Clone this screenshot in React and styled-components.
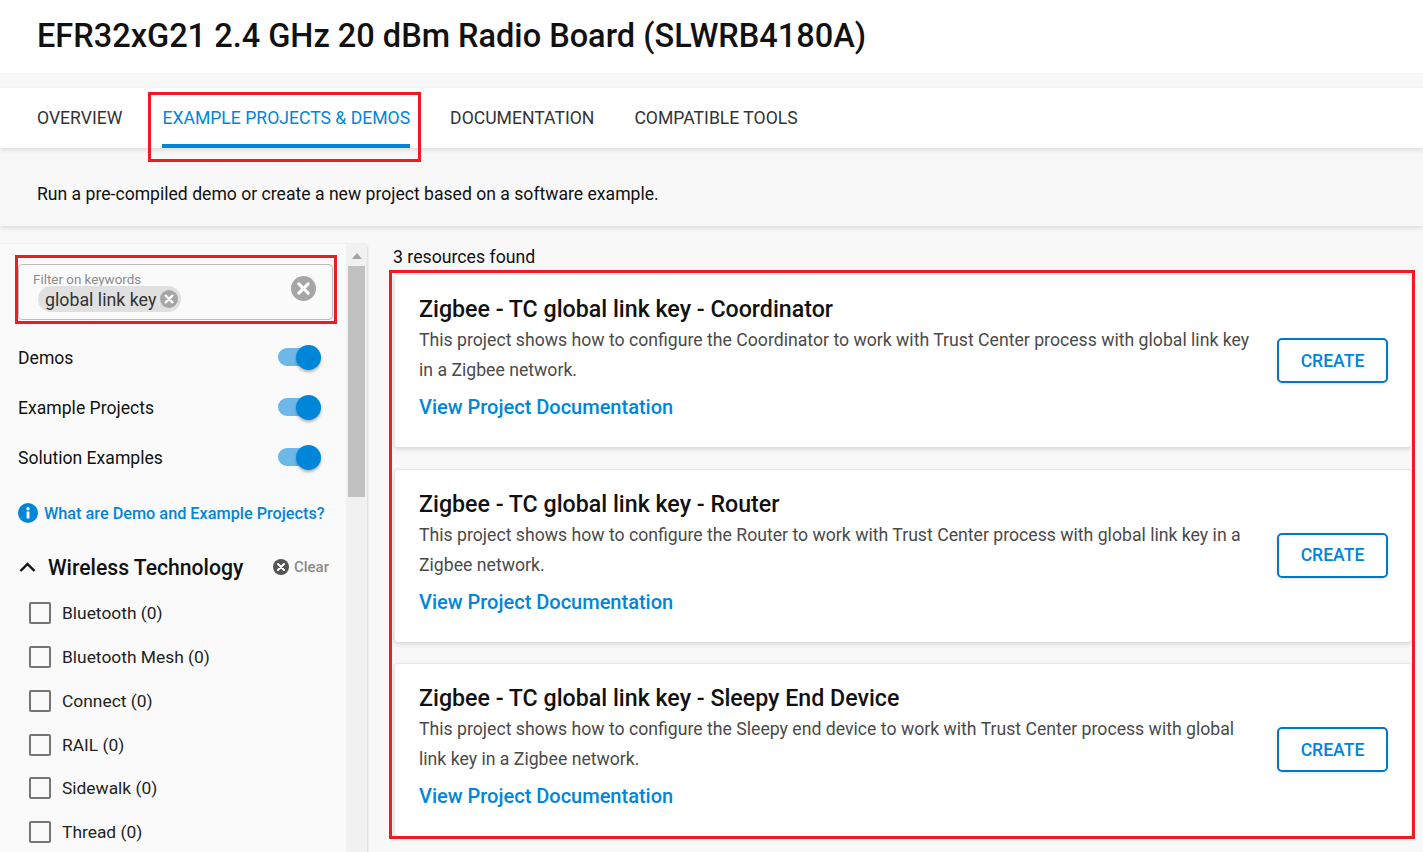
import styled, { createGlobalStyle } from 'styled-components';

const BLUE = '#0086d9';

const wireless = ['Bluetooth (0)', 'Bluetooth Mesh (0)', 'Connect (0)', 'RAIL (0)', 'Sidewalk (0)', 'Thread (0)'];
const filters = ['Demos', 'Example Projects', 'Solution Examples'];
const projects = [
  {
    title: 'Zigbee - TC global link key - Coordinator',
    text: 'This project shows how to configure the Coordinator to work with Trust Center process with global link key in a Zigbee network.',
  },
  {
    title: 'Zigbee - TC global link key - Router',
    text: 'This project shows how to configure the Router to work with Trust Center process with global link key in a Zigbee network.',
  },
  {
    title: 'Zigbee - TC global link key - Sleepy End Device',
    text: 'This project shows how to configure the Sleepy end device to work with Trust Center process with global link key in a Zigbee network.',
  },
];

const CloseIcon = ({ size, color }) => (
  <svg width={size} height={size} viewBox="0 0 24 24">
    <circle cx="12" cy="12" r="12" fill={color} />
    <path d="M7.5 7.5l9 9M16.5 7.5l-9 9" stroke="#fff" strokeWidth="3" strokeLinecap="round" />
  </svg>
);

const App = () => (
  <Page>
    <GlobalStyle />
    <Header>EFR32xG21 2.4 GHz 20 dBm Radio Board (SLWRB4180A)</Header>
    <Tabs>
      <Tab>OVERVIEW</Tab>
      <Tab $active>
        EXAMPLE PROJECTS &amp; DEMOS
        <TabHighlight />
      </Tab>
      <Tab>DOCUMENTATION</Tab>
      <Tab>COMPATIBLE TOOLS</Tab>
    </Tabs>
    <Intro>Run a pre-compiled demo or create a new project based on a software example.</Intro>
    <Content>
      <Sidebar>
        <SideInner>
          <SearchBox>
            <SearchHighlight />
            <SearchLabel>Filter on keywords</SearchLabel>
            <Chip>
              global link key
              <CloseIcon size={18} color="#a6a6a6" />
            </Chip>
            <SearchClear>
              <CloseIcon size={25} color="#a6a6a6" />
            </SearchClear>
          </SearchBox>
          <Toggles>
            {filters.map((name) => (
              <ToggleRow key={name}>
                {name}
                <Switch>
                  <Knob />
                </Switch>
              </ToggleRow>
            ))}
          </Toggles>
          <HelpLink>
            <svg width="20" height="20" viewBox="0 0 20 20">
              <circle cx="10" cy="10" r="10" fill={BLUE} />
              <rect x="8.6" y="8.5" width="2.8" height="7" fill="#fff" />
              <circle cx="10" cy="5.8" r="1.7" fill="#fff" />
            </svg>
            What are Demo and Example Projects?
          </HelpLink>
          <GroupHeader>
            <svg width="18" height="18" viewBox="0 0 18 18">
              <path d="M2.500 13L9.500 6l7 7" fill="none" stroke="#111" strokeWidth="2.400" />
            </svg>
            <GroupTitle>Wireless Technology</GroupTitle>
            <ClearButton>
              <CloseIcon size={16} color="#555" />
              Clear
            </ClearButton>
          </GroupHeader>
          <CheckList>
            {wireless.map((name) => (
              <CheckRow key={name}>
                <Checkbox />
                {name}
              </CheckRow>
            ))}
          </CheckList>
        </SideInner>
        <Scrollbar>
          <ScrollArrow />
          <ScrollThumb />
        </Scrollbar>
      </Sidebar>
      <Results>
        <Count>3 resources found</Count>
        <ResultList>
          <ResultsHighlight />
          {projects.map((p) => (
            <Card key={p.title}>
              <CardBody>
                <CardTitle>{p.title}</CardTitle>
                <CardText>{p.text}</CardText>
                <DocLink>View Project Documentation</DocLink>
              </CardBody>
              <CreateButton>CREATE</CreateButton>
            </Card>
          ))}
        </ResultList>
      </Results>
    </Content>
  </Page>
);

const GlobalStyle = createGlobalStyle`
  html, body {
    margin: 0;
    padding: 0;
    height: 100%;
    overflow: hidden;
    background: #f8f8f8;
  }
  * {
    box-sizing: border-box;
  }
`;

const Page = styled.div`
  width: 1423px;
  height: 852px;
  overflow: hidden;
  background: #f8f8f8;
  font-family: Roboto, 'Liberation Sans', sans-serif;
  color: #111;
`;

const Header = styled.h1`
  height: 73px;
  margin: 0 0 15px;
  padding: 16px 37px 0;
  background: #fff;
  font-size: 32.5px;
  line-height: 40px;
  font-weight: 500;
  color: #111;
`;

const Tabs = styled.div`
  position: relative;
  z-index: 2;
  display: flex;
  gap: 40px;
  height: 60px;
  padding-left: 37px;
  background: #fff;
  box-shadow: 0 2px 5px rgba(0, 0, 0, 0.12);
`;

const Tab = styled.div`
  position: relative;
  height: 60px;
  padding-top: 18px;
  font-size: 17.6px;
  line-height: 24px;
  color: ${(p) => (p.$active ? BLUE : '#333')};
  border-bottom: 4px solid ${(p) => (p.$active ? BLUE : 'transparent')};
`;

const TabHighlight = styled.span`
  position: absolute;
  left: -14px;
  right: -11px;
  top: 4px;
  bottom: -18px;
  border: 3px solid #ed1c24;
`;

const Intro = styled.div`
  height: 78px;
  padding: 34px 37px 0;
  font-size: 17.6px;
  line-height: 24px;
  color: #111;
  box-shadow: 0 2px 5px rgba(0, 0, 0, 0.12);
`;

const Content = styled.div`
  display: flex;
  margin-top: 18px;
`;

const Sidebar = styled.aside`
  display: flex;
  flex: none;
  width: 367px;
  height: 640px;
  background: #fafafa;
  border-top-right-radius: 4px;
  box-shadow: 0 1px 3px rgba(0, 0, 0, 0.25);
`;

const SideInner = styled.div`
  flex: none;
  width: 346px;
  padding: 20px 0 0 18px;
`;

const SearchBox = styled.div`
  position: relative;
  width: 315px;
  height: 56px;
  padding: 7px 14px 0;
  border: 1px solid #bdbdbd;
  border-radius: 4px;
`;

const SearchHighlight = styled.span`
  position: absolute;
  left: -4px;
  right: -5px;
  top: -10px;
  bottom: -5px;
  border: 3px solid #ed1c24;
`;

const SearchLabel = styled.div`
  font-size: 13.4px;
  line-height: 15px;
  color: #8a8a8a;
`;

const Chip = styled.div`
  display: inline-flex;
  align-items: center;
  gap: 4px;
  height: 26px;
  margin: -1px 0 0 5px;
  padding: 0 3px 0 7px;
  border-radius: 13px;
  background: #e0e0e0;
  font-size: 17.8px;
  color: #333;
`;

const SearchClear = styled.span`
  position: absolute;
  right: 16px;
  top: 11px;
  display: flex;
`;

const Toggles = styled.div`
  display: flex;
  flex-direction: column;
  gap: 22px;
  margin-top: 24px;
`;

const ToggleRow = styled.div`
  display: flex;
  align-items: center;
  justify-content: space-between;
  width: 300px;
  height: 28px;
  font-size: 17.6px;
  color: #111;
`;

const Switch = styled.span`
  position: relative;
  width: 40px;
  height: 18px;
  margin-top: -2px;
  border-radius: 9px;
  background: #6db8e8;
`;

const Knob = styled.span`
  position: absolute;
  right: -3px;
  top: -3px;
  width: 25px;
  height: 25px;
  border-radius: 50%;
  background: ${BLUE};
  box-shadow: 0 2px 3px rgba(0, 0, 0, 0.3);
`;

const HelpLink = styled.div`
  display: flex;
  align-items: center;
  gap: 6px;
  margin-top: 31px;
  font-size: 16.25px;
  font-weight: 500;
  color: ${BLUE};
  white-space: nowrap;
`;

const GroupHeader = styled.div`
  display: flex;
  align-items: center;
  width: 311px;
  margin-top: 29px;
  height: 30px;
`;

const GroupTitle = styled.div`
  margin-left: 12px;
  font-size: 21.15px;
  font-weight: 500;
  color: #111;
  white-space: nowrap;
`;

const ClearButton = styled.div`
  display: flex;
  align-items: center;
  gap: 5px;
  margin-left: auto;
  font-size: 15px;
  font-weight: 500;
  color: #8a8a8a;
`;

const CheckList = styled.div`
  display: flex;
  flex-direction: column;
  gap: 15.8px;
  margin-top: 17.3px;
  padding-left: 11px;
`;

const CheckRow = styled.div`
  display: flex;
  align-items: center;
  gap: 11px;
  height: 28px;
  font-size: 17.4px;
  color: #222;
`;

const Checkbox = styled.span`
  width: 22px;
  height: 22px;
  border: 2px solid #757575;
  border-radius: 2px;
`;

const Scrollbar = styled.div`
  flex: none;
  width: 21px;
  padding: 0 2px;
  background: #f1f1f1;
`;

const ScrollArrow = styled.div`
  width: 0;
  height: 0;
  margin: 9px auto 7px;
  border-left: 5px solid transparent;
  border-right: 5px solid transparent;
  border-bottom: 6px solid #a3a3a3;
`;

const ScrollThumb = styled.div`
  height: 231px;
  background: #c1c1c1;
`;

const Results = styled.main`
  flex: 1;
  padding-left: 27px;
`;

const Count = styled.div`
  height: 30px;
  margin-left: -1px;
  padding-top: 2px;
  font-size: 17.7px;
  line-height: 22px;
  color: #111;
`;

const ResultList = styled.div`
  position: relative;
  display: flex;
  flex-direction: column;
  gap: 21.5px;
  width: 1018px;
`;

const ResultsHighlight = styled.span`
  position: absolute;
  left: -5px;
  right: -3px;
  top: -4px;
  bottom: -3px;
  border: 3px solid #ed1c24;
  z-index: 1;
`;

const Card = styled.article`
  display: flex;
  align-items: center;
  justify-content: space-between;
  height: 173px;
  padding: 0 23px 0 24px;
  background: #fff;
  border: 1px solid #e8e8e8;
  border-bottom: none;
  border-radius: 4px;
  box-shadow: 0 2px 5px rgba(0, 0, 0, 0.15);
`;

const CardBody = styled.div`
  align-self: flex-start;
  width: 835px;
  padding-top: 19px;
`;

const CardTitle = styled.div`
  margin-bottom: 1px;
  font-size: 23.2px;
  line-height: 30px;
  font-weight: 500;
  color: #111;
`;

const CardText = styled.div`
  font-size: 17.66px;
  line-height: 30px;
  color: #4a4a4a;
`;

const DocLink = styled.div`
  margin-top: 7px;
  font-size: 20px;
  line-height: 30px;
  font-weight: 500;
  color: ${BLUE};
`;

const CreateButton = styled.div`
  display: flex;
  align-items: center;
  justify-content: center;
  flex: none;
  width: 111px;
  height: 45px;
  margin-top: -1px;
  border: 2px solid #0079c4;
  border-radius: 5px;
  font-size: 17.6px;
  font-weight: 500;
  color: ${BLUE};
  box-shadow: 0 1px 3px rgba(0, 0, 0, 0.12);
`;

export default App;
